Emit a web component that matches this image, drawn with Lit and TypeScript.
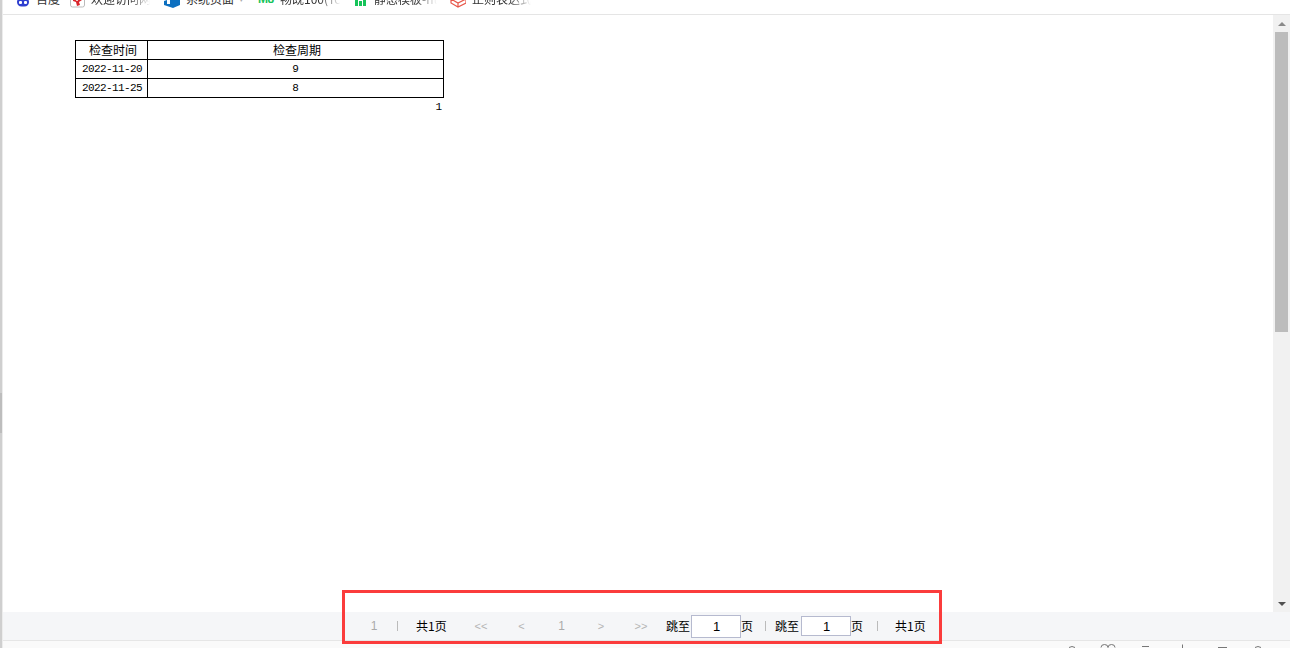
import { LitElement, html, css, svg } from "lit";
import { customElement } from "lit/decorators.js";

@customElement("app-root")
export class AppRoot extends LitElement {
  static styles = css`
    :host { display: flex; width: 1290px; height: 648px; overflow: hidden; background: #fff; position: relative; font-family: "Noto Sans CJK SC", "Liberation Sans", sans-serif; font-size: 12px; color: #000; }
    * { box-sizing: border-box; }
    .strip { flex: none; width: 3px; background: #cfcfcf; border-right: 1px solid #ececec; }
    .grip { height: 40px; margin-top: 393px; background: #bdbdbd; }
    .main { flex: 1; min-width: 0; display: flex; flex-direction: column; }
    .bar { flex: none; height: 15px; border-bottom: 1px solid #e5e5e5; overflow: hidden; display: flex; padding-left: 12px; }
    .bm { display: flex; align-items: flex-start; gap: 6px; height: 18px; margin-top: -10px; line-height: 18px; color: #333; white-space: nowrap; }
    .bm svg { flex: none; }
    .bm b { color: #16c45a; font-size: 12px; font-family: "Liberation Sans", sans-serif; width: 16px; letter-spacing: -0.5px; }
    .fade { overflow: hidden; -webkit-mask-image: linear-gradient(90deg, #000 65%, transparent); mask-image: linear-gradient(90deg, #000 65%, transparent); }
    .m1 { width: 55px; } .m2 { width: 94px; } .m3 { width: 94px; } .m4 { width: 97px; } .m5 { width: 95px; }
    .t2 { width: 59px; } .t3 { width: 48px; } .t4 { width: 61px; } .t5 { width: 63px; } .t6 { width: 59px; }
    .caret { color: #aaa; font-size: 9px; margin-left: -1px; }
    .middle { flex: 1; display: flex; min-height: 0; }
    .page { flex: 1; padding: 25px 0 0 72px; }
    table { border-collapse: collapse; width: 369px; table-layout: fixed; line-height: 18px; }
    td { border: 1px solid #000; padding: 0; height: 19px; text-align: center; white-space: nowrap; }
    .c1 { width: 72px; }
    .head { padding-left: 3px; }
    .date, .num-cell { font: 11px/17px "Liberation Mono", monospace; padding-top: 1px; }
    .date { letter-spacing: -0.6px; padding-left: 1px; }
    .pageno { width: 369px; text-align: right; padding-right: 2px; font: 11px/18px "Liberation Mono", monospace; }
    .sb { flex: none; width: 17px; background: #f1f1f1; display: flex; flex-direction: column; align-items: center; }
    .up { margin-top: 7px; width: 0; height: 0; border: 4px solid transparent; border-top: 0; border-bottom: 4px solid #8a8a8a; }
    .thumb { margin-top: 6px; width: 13px; height: 300px; background: #bcbcbc; }
    .down { margin-top: auto; margin-bottom: 6px; width: 0; height: 0; border: 4px solid transparent; border-bottom: 0; border-top: 4px solid #505050; }
    .pager { flex: none; height: 28px; background: #f5f6f8; display: flex; align-items: center; padding-left: 361px; white-space: nowrap; line-height: 16px; }
    .pager > * { flex: none; }
    .g { width: 20px; text-align: center; color: #aaa; font-family: "Liberation Sans", sans-serif; }
    .sep { width: 1px; height: 10px; background: #bbb; margin-left: 13px; }
    .total { width: 30px; margin-left: 18px; text-align: center; }
    .nav { width: 40px; text-align: center; color: #b4b4b4; font: 11px "Liberation Sans", sans-serif; }
    .nav.num { font-size: 12px; color: #aaa; padding-left: 1px; }
    .first { margin-left: 15px; }
    .back { padding-left: 1px; }
    .jump { margin-left: 5px; width: 25px; }
    .jump2 { margin-left: 9px; width: 25px; }
    input { width: 50px; height: 23px; border: 1px solid #b6bacf; background: #fff; text-align: center; padding: 0 0 0 1px; font: 13px "Liberation Sans", sans-serif; color: #000; outline: none; }
    .i2 { height: 20px; margin-left: 1px; }
    .pg { width: 12px; }
    .s2 { margin-left: 12px; }
    .s3 { margin-left: 14px; }
    .t-last { margin-left: 17px; }
    .status { flex: none; height: 8px; border-top: 1px solid #e6e6e6; background: #fafafa; display: flex; padding-left: 1063px; overflow: hidden; }
    .red { position: absolute; left: 342px; top: 590px; width: 600px; height: 54px; border: 3px solid #fb3c3c; pointer-events: none; }
  `;

  private icon(body: unknown, w = 16) {
    return html`<svg width=${w} height="18" viewBox="0 0 ${w} 18" aria-hidden="true">${body}</svg>`;
  }

  render() {
    const baidu = svg`<g transform="translate(1 0)"><path d="M2 9q5-4 10 0q2 3 0 6q-2 2-5 1.4q-3 .6-5-1.4q-2-3 0-6z" fill="#2f3fd0"/><rect x="3" y="11" width="3" height="3" rx="1" fill="#fff"/><rect x="8" y="11" width="3" height="3" rx="1" fill="#fff"/></g>`;
    const welcome = svg`<rect x="0.5" y="4" width="14" height="13" rx="2" fill="#fff" stroke="#bbb"/><path d="M3 9h4l3-3 2 4-3 2 1 3-3 1-1-4-3-1z" fill="#d9252b"/><circle cx="7" cy="10" r="1" fill="#fff"/>`;
    const sys = svg`<path d="M0 11l9-3 7 1v6l-7 3-9-3z" fill="#0c6fc0"/><rect x="3" y="10" width="3" height="4" fill="#fff"/>`;
    const n3 = svg`<rect x="0" y="9" width="3" height="7" fill="#16c45a"/><rect x="4" y="11" width="3" height="5" fill="#16c45a"/><rect x="8" y="9" width="3" height="7" fill="#16c45a"/>`;
    const cube = svg`<path d="M1 9l7-4 8 4v4l-8 4-7-4zM1 9l7 4 8-4M8 13v4" fill="#fff" stroke="#e8574a" stroke-width="1.2"/>`;
    return html`
      <div class="strip"><div class="grip"></div></div>
      <div class="main">
        <div class="bar">
          <div class="bm m1">${this.icon(baidu, 15)}<span>百度</span></div>
          <div class="bm m2">${this.icon(welcome, 15)}<span class="fade t2">欢迎访问网站</span></div>
          <div class="bm m3">${this.icon(sys, 16)}<span class="t3">系统页面</span><span class="caret">▾</span></div>
          <div class="bm m4"><b>M8</b><span class="fade t4">畅既100(Tc</span></div>
          <div class="bm m5">${this.icon(n3, 13)}<span class="fade t5">静态模板-html</span></div>
          <div class="bm">${this.icon(cube, 16)}<span class="fade t6">正则表达式</span></div>
        </div>
        <div class="middle">
          <div class="page">
            <table>
              <tr><td class="c1 head">检查时间</td><td class="head">检查周期</td></tr>
              <tr><td class="date">2022-11-20</td><td class="num-cell">9</td></tr>
              <tr><td class="date">2022-11-25</td><td class="num-cell">8</td></tr>
            </table>
            <div class="pageno">1</div>
          </div>
          <div class="sb"><div class="up"></div><div class="thumb"></div><div class="down"></div></div>
        </div>
        <div class="pager">
          <span class="g">1</span><span class="sep"></span><span class="total">共1页</span>
          <span class="nav first">&lt;&lt;</span><span class="nav back">&lt;</span><span class="nav num">1</span><span class="nav">&gt;</span><span class="nav">&gt;&gt;</span>
          <span class="jump">跳至</span><input value="1" aria-label="跳至" /><span class="pg">页</span>
          <span class="sep s2"></span>
          <span class="jump2">跳至</span><input class="i2" value="1" aria-label="跳至" /><span class="pg">页</span>
          <span class="sep s3"></span><span class="total t-last">共1页</span>
        </div>
        <div class="status">
          <svg width="200" height="7" viewBox="0 0 200 7" aria-hidden="true" fill="none" stroke="#777" stroke-width="1">
            <path d="M3 6.5q3-2 6 0"/>
            <path d="M35 6.5q0-3 3.5-3t3.5 3M42 6.5q0-3 3.5-3t3.5 3"/>
            <path d="M76 5.5h7"/>
            <path d="M116.5 3.5v4"/>
            <path d="M152 6.5h9"/>
            <path d="M189 6.5q3-2 6 0"/>
          </svg>
        </div>
      </div>
      <div class="red"></div>
    `;
  }
}
